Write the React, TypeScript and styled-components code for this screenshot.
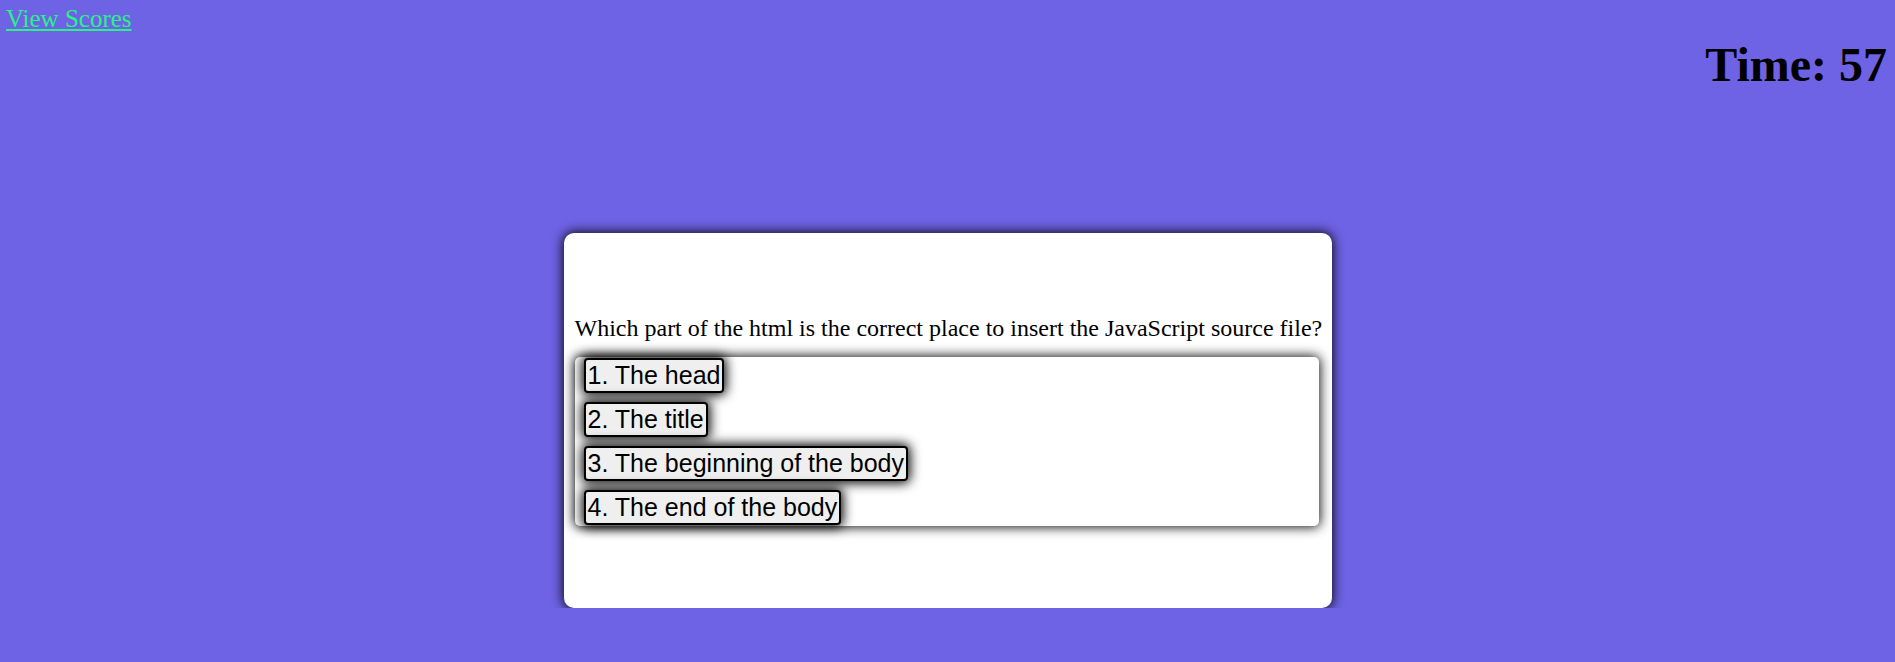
import styled, { createGlobalStyle } from 'styled-components';

const GlobalStyle = createGlobalStyle`
  html, body {
    margin: 0;
    background: #6e63e5;
    font-family: "Liberation Serif", "Times New Roman", serif;
  }
`;

const Header = styled.header`
  display: flex;
  justify-content: space-between;
  align-items: flex-start;
  padding: 5px 8px 0 6px;
`;

const ScoresLink = styled.a`
  color: #28f288;
  font-size: 25px;
  text-decoration: underline;
`;

const Timer = styled.h1`
  margin: 32px 0;
  font-size: 48px;
  font-weight: bold;
  color: #000;
`;

const Card = styled.section`
  box-sizing: border-box;
  width: 768px;
  height: 375px;
  margin: 109px auto 0;
  padding: 0 13px 0 11px;
  display: flex;
  flex-direction: column;
  justify-content: center;
  gap: 15px;
  background: #fff;
  border-radius: 10px;
  box-shadow: 0 0 12px 1px rgba(0, 0, 0, 0.95);
`;

const Question = styled.p`
  margin: 0;
  font-size: 24px;
  white-space: nowrap;
  color: #000;
`;

const Choices = styled.div`
  display: flex;
  flex-direction: column;
  align-items: flex-start;
  gap: 9px;
  padding: 1px 0 1px 9px;
  background: #fff;
  border-radius: 5px;
  box-shadow: 0 0 12px 1px rgba(0, 0, 0, 0.95);
`;

const Choice = styled.button`
  font-family: "Liberation Sans", Arial, sans-serif;
  font-size: 25px;
  padding: 1px 2px;
  color: #000;
  background: #efefef;
  border: 2px solid #000;
  border-radius: 4px;
  box-shadow: 0 0 12px 2px #000;
  cursor: pointer;
`;

const choices = [
  '1. The head',
  '2. The title',
  '3. The beginning of the body',
  '4. The end of the body',
];

export default function App() {
  return (
    <>
      <GlobalStyle />
      <Header>
        <ScoresLink href="#">View Scores</ScoresLink>
        <Timer>Time: 57</Timer>
      </Header>
      <Card>
        <Question>
          Which part of the html is the correct place to insert the JavaScript source file?
        </Question>
        <Choices>
          {choices.map((c) => (
            <Choice key={c}>{c}</Choice>
          ))}
        </Choices>
      </Card>
    </>
  );
}
